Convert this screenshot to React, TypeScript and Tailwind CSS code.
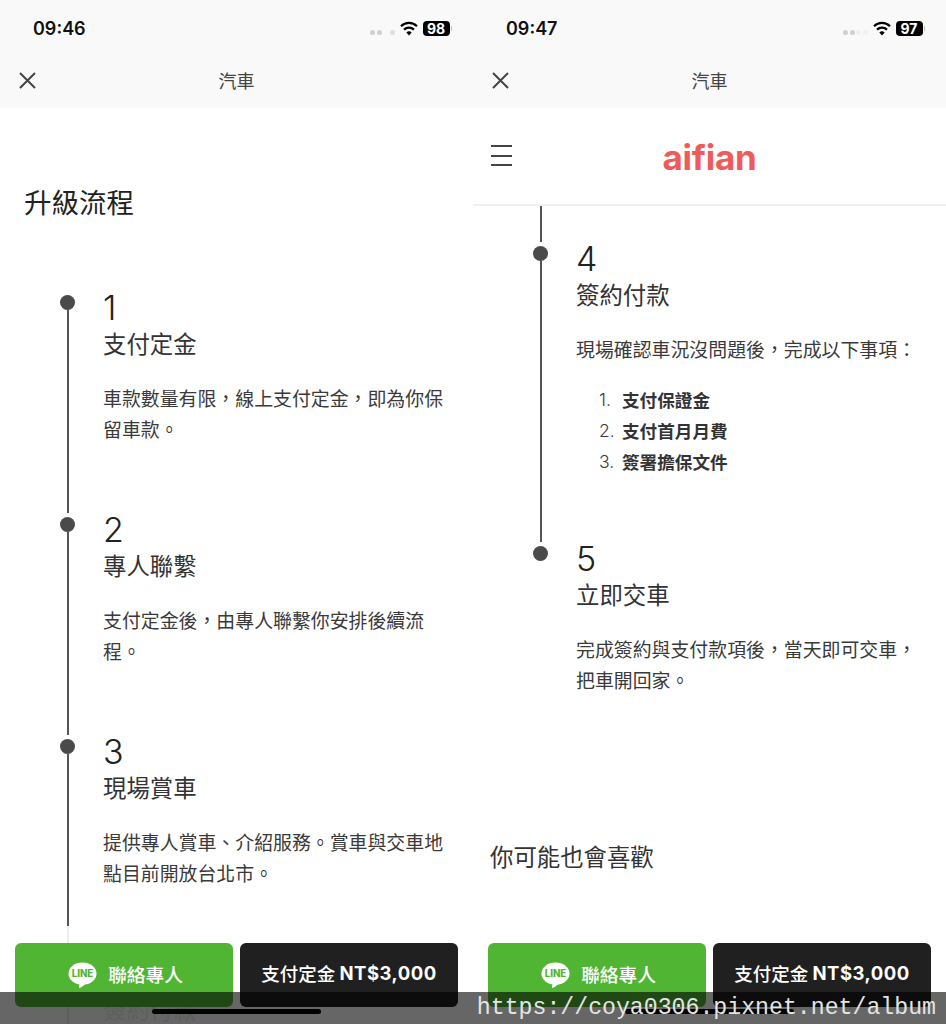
import React from 'react';

// CJK face first so full-width punctuation sits in the middle of its cell
const cjk = "font-['Noto_Sans_CJK_TC','Inter',sans-serif]";
const latin = "font-['Inter','Noto_Sans_CJK_TC',sans-serif]";

type StepProps = {
  num: string;
  title: string;
  height: string;
  children: React.ReactNode;
  last?: boolean;
};

// One node of the timeline: dot + line on the left, copy on the right
const Step = ({ num, title, height, children, last }: StepProps) => (
  <div className={`flex ${height}`}>
    <div className="ml-[60px] flex w-[15px] flex-col items-center pb-[4px]">
      <div className="h-[15px] w-[15px] shrink-0 rounded-full bg-[#4a4a4a]" />
      {!last && <div className="w-[2px] flex-1 bg-[#555555]" />}
    </div>
    <div className="ml-[28px] w-[345px]">
      <div className={`text-[34px] leading-[26px] font-light text-[#222222] ${latin}`}>{num}</div>
      <div className="mt-[6px] text-[23.4px] leading-[32px] text-[#333333]">{title}</div>
      <div className="mt-[23px] text-[18.9px] leading-[31px] text-[#3a3a3a]">{children}</div>
    </div>
  </div>
);

const StatusBar = ({ time, battery, dim }: { time: string; battery: string; dim: boolean }) => (
  <div className="flex h-[56px] items-center justify-between pt-[1px] pr-[21px] pl-[33px]">
    <span className={`text-[18px] font-semibold text-[#111111] ${latin}`}>{time}</span>
    <div className="flex items-center">
      <div className="mt-[8px] mr-[5px] flex gap-[1.5px]">
        <span className="h-[5px] w-[5px] rounded-full bg-[#d0d0d0]" />
        <span className="h-[5px] w-[5px] rounded-full bg-[#d0d0d0]" />
        <span className={`h-[5px] w-[5px] rounded-full ${dim ? 'bg-[#f0f0f0]' : 'bg-[#f9f9f9]'}`} />
        <span className={`h-[5px] w-[5px] rounded-full ${dim ? 'bg-[#f0f0f0]' : 'bg-[#dedede]'}`} />
      </div>
      <svg width="18" height="15" viewBox="0 0 18 15" className="mr-[5px]">
        <path d="M1 5.2a11.5 11.5 0 0 1 16 0" fill="none" stroke="#000" strokeWidth="2.2" />
        <path d="M4 8.6a7.2 7.2 0 0 1 10 0" fill="none" stroke="#000" strokeWidth="2.2" />
        <path d="M9 14.6 6.3 11.6a3.8 3.8 0 0 1 5.4 0z" fill="#000" />
      </svg>
      <div className={`flex h-[15px] w-[27px] items-center justify-center rounded-[4px] bg-black text-[14px] leading-none font-bold text-white ${latin}`}>
        {battery}
      </div>
      <div className="ml-[1px] h-[5px] w-[1.5px] rounded-r-full bg-[#bbbbbb]" />
    </div>
  </div>
);

const NavBar = () => (
  <div className="relative flex h-[52px] items-center justify-center pb-[3px]">
    <svg width="19" height="19" viewBox="0 0 19 19" className="absolute top-[15px] left-[18px]">
      <path d="M2 2l15 15M17 2 2 17" stroke="#444444" strokeWidth="2" fill="none" />
    </svg>
    <span className="text-[18px] text-[#444444]">汽車</span>
  </div>
);

const LineIcon = () => (
  <svg width="29" height="27" viewBox="0 0 30 27" className="mt-[2px]">
    <ellipse cx="15" cy="11.5" rx="14.5" ry="11.5" fill="#fff" />
    <path d="M12 21h7c-2 2.5-4.5 4.5-7.5 5.5-.5-1 .5-3 .5-5.5z" fill="#fff" />
    <text x="15" y="15" textAnchor="middle" fontSize="10" fontWeight="800" fontFamily="Inter, sans-serif" fill="#50b533">
      LINE
    </text>
  </svg>
);

const BottomBar = () => (
  <div className="absolute right-0 bottom-0 left-0 h-[98px] bg-white/90">
    <div className="mt-[17px] flex gap-[7px] pl-[15px]">
      <button className="flex h-[64px] w-[218px] items-center justify-center gap-[11px] rounded-[6px] bg-[#50b533] pb-[2px] pl-[3px] text-[18.7px] font-medium text-white">
        <LineIcon />
        聯絡專人
      </button>
      <button className="flex h-[64px] w-[218px] items-center justify-center rounded-[6px] bg-[#202020] pb-[2px] text-[18.5px] font-medium text-white">
        支付定金&nbsp;<span className={`font-bold tracking-[0.5px] ${latin}`}>NT$3,000</span>
      </button>
    </div>
    <div className="absolute bottom-[10px] left-[152px] h-[5px] w-[169px] rounded-full bg-black" />
  </div>
);

const App = () => {
  return (
    <div lang="zh-TW" className={`relative flex h-screen w-full overflow-hidden bg-white ${cjk}`}>
      {/* Left phone */}
      <div className="relative h-full w-[473px] overflow-hidden">
        <div className="bg-[#f9f9f9]">
          <StatusBar time="09:46" battery="98" dim={false} />
          <NavBar />
        </div>
        <h2 className="mt-[75px] ml-[24px] text-[27.5px] leading-[36px] text-[#222222]">升級流程</h2>
        <div className="mt-[76px]">
          <Step num="1" title="支付定金" height="h-[222px]">
            車款數量有限，線上支付定金，即為你保留車款。
          </Step>
          <Step num="2" title="專人聯繫" height="h-[222px]">
            支付定金後，由專人聯繫你安排後續流程。
          </Step>
          <Step num="3" title="現場賞車" height="h-[222px]">
            提供專人賞車、介紹服務。賞車與交車地點目前開放台北市。
          </Step>
          <Step num="4" title="簽約付款" height="h-[222px]">
            現場確認車況沒問題後，完成以下事項：
          </Step>
        </div>
        <BottomBar />
      </div>

      {/* Right phone */}
      <div className="relative h-full w-[473px] overflow-hidden">
        <div className="bg-[#f9f9f9]">
          <StatusBar time="09:47" battery="97" dim />
          <NavBar />
        </div>
        <div className="relative flex h-[98px] items-center justify-center border-b-2 border-[#f0f0f0] pt-[3px]">
          <div className="absolute top-[37px] left-[18px] flex h-[21px] w-[21px] flex-col justify-between">
            <span className="h-[2px] w-full bg-[#444444]" />
            <span className="h-[2px] w-full bg-[#444444]" />
            <span className="h-[2px] w-full bg-[#444444]" />
          </div>
          <span className={`text-[35px] leading-none font-bold tracking-[-0.3px] text-[#ef5b5a] ${latin}`}>aifian</span>
        </div>
        <div className="ml-[67px] h-[36px] w-[2px] bg-[#555555]" />
        <div className="mt-[4px]">
          <Step num="4" title="簽約付款" height="h-[300px]">
            現場確認車況沒問題後，完成以下事項：
            <ol className="mt-[20px] ml-[23px] text-[17.6px]">
              {['支付保證金', '支付首月月費', '簽署擔保文件'].map((item, i) => (
                <li key={item} className="flex">
                  <span className={`w-[23px] font-light ${latin}`}>{i + 1}.</span>
                  <span className="font-bold text-[#333333]">{item}</span>
                </li>
              ))}
            </ol>
          </Step>
          <Step num="5" title="立即交車" height="h-[270px]" last>
            完成簽約與支付款項後，當天即可交車，把車開回家。
          </Step>
        </div>
        <h3 className="mt-[24px] ml-[17px] text-[23.4px] leading-[32px] text-[#333333]">你可能也會喜歡</h3>
        <BottomBar />
      </div>

      {/* Watermark strip across the photo */}
      <div className="absolute right-0 bottom-0 left-0 flex h-[32px] items-center justify-end bg-black/60 pt-[1px] pr-[10px]">
        <span className="font-['Liberation_Mono',monospace] text-[23.2px] leading-none text-[#e4e4e4]">
          https://coya0306.pixnet.net/album
        </span>
      </div>
    </div>
  );
};

export default App;
